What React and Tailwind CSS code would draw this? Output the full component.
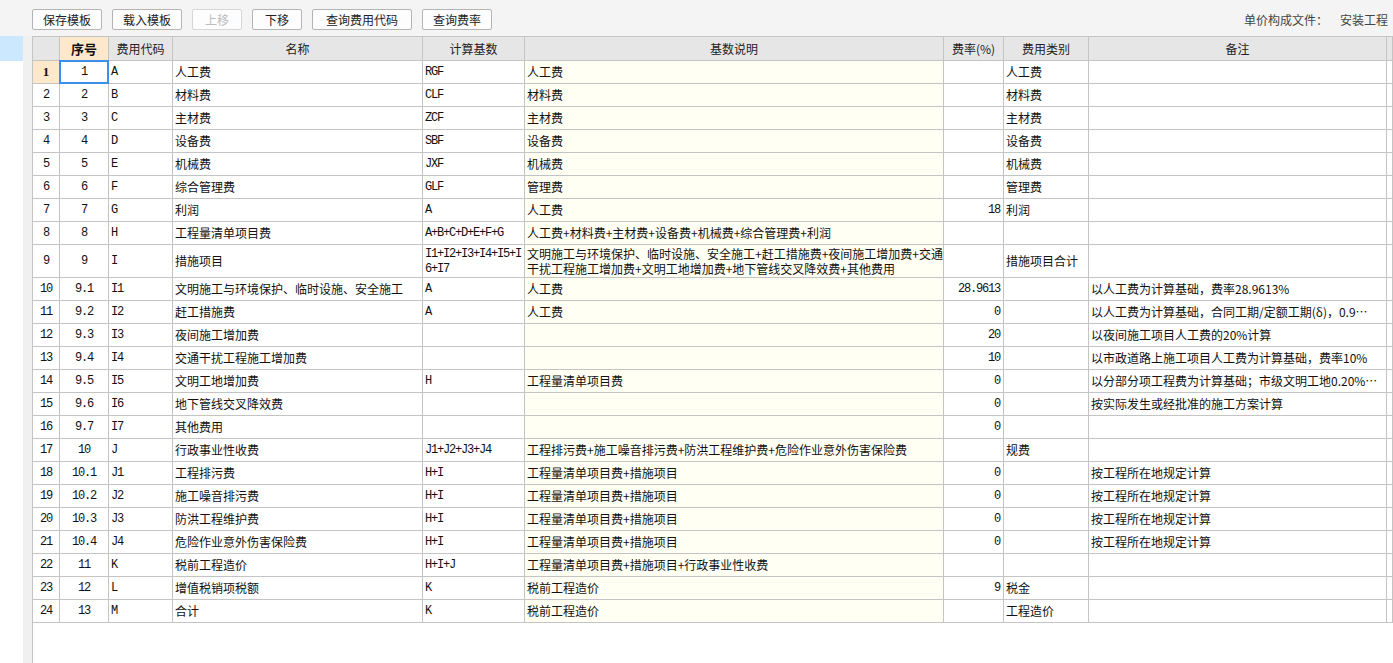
import React from "react";

const cols = "grid grid-cols-[27px_49px_64px_250px_102px_419px_60px_85px_298px_1fr]";
const cjk = "font-['Noto_Sans_CJK_SC',sans-serif] text-[12px]";
const mono = "font-['Liberation_Mono','Noto_Sans_CJK_SC',monospace] text-[12px] tracking-[-1.2px]";
const line = "border-r border-b border-[#c4c4c4]";

const rows = [
    ["1", "A", "人工费", "RGF", "人工费", "", "人工费", ""],
    ["2", "B", "材料费", "CLF", "材料费", "", "材料费", ""],
    ["3", "C", "主材费", "ZCF", "主材费", "", "主材费", ""],
    ["4", "D", "设备费", "SBF", "设备费", "", "设备费", ""],
    ["5", "E", "机械费", "JXF", "机械费", "", "机械费", ""],
    ["6", "F", "综合管理费", "GLF", "管理费", "", "管理费", ""],
    ["7", "G", "利润", "A", "人工费", "18", "利润", ""],
    ["8", "H", "工程量清单项目费", "A+B+C+D+E+F+G", "人工费+材料费+主材费+设备费+机械费+综合管理费+利润", "", "", ""],
    ["9", "I", "措施项目", "", "", "", "措施项目合计", ""],
    ["9.1", "I1", "文明施工与环境保护、临时设施、安全施工", "A", "人工费", "28.9613", "", "以人工费为计算基础，费率28.9613%"],
    ["9.2", "I2", "赶工措施费", "A", "人工费", "0", "", "以人工费为计算基础，合同工期/定额工期(δ)，0.9…"],
    ["9.3", "I3", "夜间施工增加费", "", "", "20", "", "以夜间施工项目人工费的20%计算"],
    ["9.4", "I4", "交通干扰工程施工增加费", "", "", "10", "", "以市政道路上施工项目人工费为计算基础，费率10%"],
    ["9.5", "I5", "文明工地增加费", "H", "工程量清单项目费", "0", "", "以分部分项工程费为计算基础；市级文明工地0.20%…"],
    ["9.6", "I6", "地下管线交叉降效费", "", "", "0", "", "按实际发生或经批准的施工方案计算"],
    ["9.7", "I7", "其他费用", "", "", "0", "", ""],
    ["10", "J", "行政事业性收费", "J1+J2+J3+J4", "工程排污费+施工噪音排污费+防洪工程维护费+危险作业意外伤害保险费", "", "规费", ""],
    ["10.1", "J1", "工程排污费", "H+I", "工程量清单项目费+措施项目", "0", "", "按工程所在地规定计算"],
    ["10.2", "J2", "施工噪音排污费", "H+I", "工程量清单项目费+措施项目", "0", "", "按工程所在地规定计算"],
    ["10.3", "J3", "防洪工程维护费", "H+I", "工程量清单项目费+措施项目", "0", "", "按工程所在地规定计算"],
    ["10.4", "J4", "危险作业意外伤害保险费", "H+I", "工程量清单项目费+措施项目", "0", "", "按工程所在地规定计算"],
    ["11", "K", "税前工程造价", "H+I+J", "工程量清单项目费+措施项目+行政事业性收费", "", "", ""],
    ["12", "L", "增值税销项税额", "K", "税前工程造价", "9", "税金", ""],
    ["13", "M", "合计", "K", "税前工程造价", "", "工程造价", ""],
];

const buttons = [
    { label: "保存模板", w: "w-[70px]" },
    { label: "载入模板", w: "w-[70px]" },
    { label: "上移", w: "w-[50px]", disabled: true },
    { label: "下移", w: "w-[50px]" },
    { label: "查询费用代码", w: "w-[100px]" },
    { label: "查询费率", w: "w-[70px]" },
];

const headers = ["", "序号", "费用代码", "名称", "计算基数", "基数说明", "费率(%)", "费用类别", "备注", ""];

const Row = ({ r, i }) => {
    const tall = i === 8;
    const first = i === 0;
    return (
        <div className={`${cols} ${tall ? "h-[33px]" : "h-[23px]"}`}>
            <div className={`${line} flex items-center justify-center ${first ? "bg-[#fde8cc] font-bold font-['Liberation_Serif',serif] text-[13px]" : mono}`}>
                {i + 1}
            </div>
            <div className={`${line} relative flex items-center justify-center ${mono}`}>
                {r[0]}
                {first && <div className="absolute -inset-px border-2 border-[#3d8fe9] z-10"></div>}
            </div>
            <div className={`${line} flex items-center px-[2px] ${mono}`}>{r[1]}</div>
            <div className={`${line} flex items-center px-[2px] ${cjk} whitespace-nowrap overflow-hidden`}>{r[2]}</div>
            {tall ? (
                <div className={`${line} px-[2px] pt-[2px] leading-[15px] whitespace-nowrap overflow-hidden ${mono}`}>
                    I1+I2+I3+I4+I5+I<br />6+I7
                </div>
            ) : (
                <div className={`${line} flex items-center px-[2px] ${mono} whitespace-nowrap overflow-hidden`}>{r[3]}</div>
            )}
            {tall ? (
                <div className={`${line} bg-[#fffff4] px-[2px] pt-[1px] leading-[15px] whitespace-nowrap overflow-hidden ${cjk}`}>
                    文明施工与环境保护、临时设施、安全施工+赶工措施费+夜间施工增加费+交通<br />干扰工程施工增加费+文明工地增加费+地下管线交叉降效费+其他费用
                </div>
            ) : (
                <div className={`${line} bg-[#fffff4] flex items-center px-[2px] ${cjk} whitespace-nowrap overflow-hidden`}>{r[4]}</div>
            )}
            <div className={`${line} flex items-center justify-end pr-[3px] ${mono}`}>{r[5]}</div>
            <div className={`${line} flex items-center px-[2px] ${cjk} whitespace-nowrap overflow-hidden`}>{r[6]}</div>
            <div className={`${line} flex items-center px-[2px] ${cjk} whitespace-nowrap overflow-hidden`}>{r[7]}</div>
            <div className={`${line}`}></div>
        </div>
    );
};

const App = () => {
    return (
        <div className="w-full h-[663px] flex flex-col bg-white overflow-hidden text-[#111]">
            <div className="h-[36px] shrink-0 bg-[#f4f4f4] flex items-start pt-[9px] pl-[32px] gap-[10px]">
                {buttons.map((b) => (
                    <button
                        key={b.label}
                        className={`${b.w} h-[21px] rounded-[2px] border bg-[#fdfdfd] ${cjk} leading-none ${b.disabled ? "border-[#d6d6d6] text-[#bcbcbc]" : "border-[#b4b4b4] text-[#222]"}`}
                    >
                        {b.label}
                    </button>
                ))}
                <div className={`ml-auto pr-[5px] pt-[2px] flex gap-[12px] text-[#444] ${cjk}`}>
                    <span>单价构成文件：</span>
                    <span>安装工程</span>
                </div>
            </div>
            <div className="flex flex-1 min-h-0">
                <div className="w-[23px] shrink-0 bg-white">
                    <div className="h-[25px] bg-[#cce8ff]"></div>
                </div>
                <div className="w-[10px] shrink-0 bg-[#f0f0f0] border-r border-[#c4c4c4]"></div>
                <div className="flex-1 min-w-0 border-t border-[#c4c4c4]">
                    <div className={`${cols} h-[24px] bg-[#e6e6e6]`}>
                        {headers.map((h, i) => (
                            <div
                                key={i}
                                className={`${line} flex items-center justify-center ${i === 1 ? "bg-[#fde8cc] font-bold font-['Noto_Sans_CJK_SC',sans-serif] text-[13px] text-[#111]" : `${cjk} text-[#222]`}`}
                            >
                                {h}
                            </div>
                        ))}
                    </div>
                    {rows.map((r, i) => (
                        <Row key={i} r={r} i={i} />
                    ))}
                </div>
            </div>
        </div>
    );
};

export default App;
